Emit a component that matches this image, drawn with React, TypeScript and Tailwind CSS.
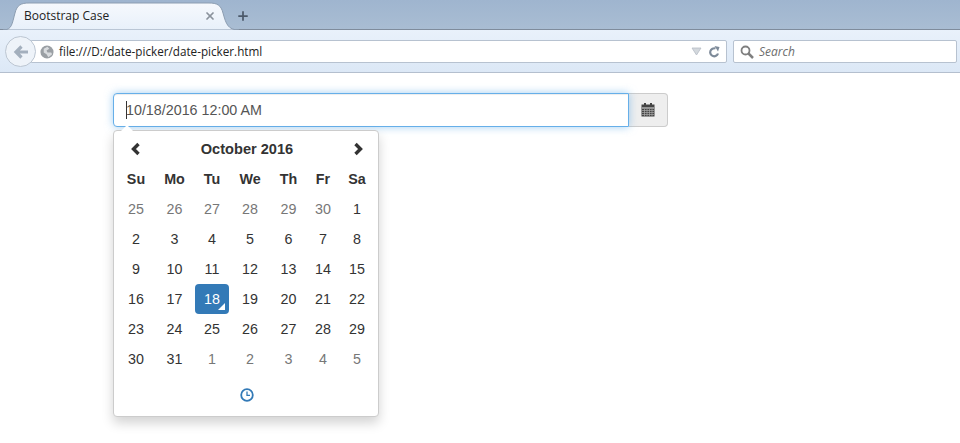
import { Plus, X } from "lucide-react";

const COLUMNS = "grid grid-cols-[36px_41px_34px_42px_35px_34px_34px]";
const WEEKDAYS = ["Su", "Mo", "Tu", "We", "Th", "Fr", "Sa"];

const DAYS: { d: number; old?: boolean }[] = [
  ...[25, 26, 27, 28, 29, 30].map((d) => ({ d, old: true })),
  ...Array.from({ length: 31 }, (_, i) => ({ d: i + 1 })),
  ...[1, 2, 3, 4, 5].map((d) => ({ d, old: true })),
];

const Chevron = ({ left }: { left?: boolean }) => (
  <svg width="14" height="14" viewBox="0 0 14 14">
    <path
      d={left ? "M9.500 2 L4.500 7 L9.500 12" : "M4.500 2 L9.500 7 L4.500 12"}
      fill="none"
      stroke="#333"
      strokeWidth="3.400"
    />
  </svg>
);

const CalendarIcon = () => (
  <svg width="14" height="14" viewBox="0 0 14 14">
    <rect x="0.500" y="1.500" width="13" height="12" fill="#444" />
    <rect x="3" y="0" width="2" height="3" fill="#444" />
    <rect x="9" y="0" width="2" height="3" fill="#444" />
    <path d="M1 5h12" stroke="#e6e6e6" strokeWidth="1" />
    <path d="M1 7.500h12M1 9.500h12M1 11.500h12M3.500 6v7M6 6v7M8.500 6v7M11 6v7" stroke="#aaa" strokeWidth="0.700" />
  </svg>
);

const ClockIcon = () => (
  <svg width="14" height="14" viewBox="0 0 14 14">
    <circle cx="7" cy="7" r="5.800" fill="none" stroke="#337ab7" strokeWidth="1.800" />
    <path d="M7 3.500V7.300H10" fill="none" stroke="#337ab7" strokeWidth="1.300" />
  </svg>
);

const BrowserChrome = () => (
  <div className="font-['Open_Sans',sans-serif]">
    <div className="h-[30px] bg-gradient-to-b from-[#9fb5cf] to-[#a9bdd3] flex items-end pl-[3px] border-b border-[#7f8c9c]">
      <div className="relative w-[236px] h-[28px] -mb-px flex items-center pl-[21px] pr-[13px]">
        <svg className="absolute inset-0" width="236" height="28" viewBox="0 0 236 28">
          <defs>
            <linearGradient id="tab" x1="0" y1="0" x2="0" y2="1">
              <stop offset="0" stopColor="#f6f9fd" />
              <stop offset="1" stopColor="#e8f0fa" />
            </linearGradient>
          </defs>
          <path
            d="M0 28 C9 28 9 22 12 11 C14 3 18 1 26 1 H206 C214 1 218 3 220 11 C223 22 225 28 236 28 Z"
            fill="url(#tab)"
            stroke="#8c9db1"
            strokeWidth="1"
          />
        </svg>
        <span className="relative flex-1 text-[12px] text-[#222]">Bootstrap Case</span>
        <X className="relative mr-[10px] text-[#8a929c]" size={12} strokeWidth={3.5} />
      </div>
      <Plus className="ml-[-3px] mb-[6px] text-[#4c5a6b]" size={14} strokeWidth={3} />
    </div>
    <div className="h-[43px] bg-gradient-to-b from-[#e9f1fb] to-[#dce8f6] border-b border-[#b4bfce] flex items-center pl-[5px] pr-[3px] pt-px">
      <div className="relative z-10 w-[31px] h-[31px] rounded-full bg-[#eef3f9] border border-[#bcc6d2] flex items-center justify-center -mr-[5px]">
        <svg width="16" height="14" viewBox="0 0 16 14">
          <path d="M15 7H4M8.500 1.500L3 7l5.500 5.500" fill="none" stroke="#a3afbd" strokeWidth="3.200" />
        </svg>
      </div>
      <div className="flex-1 h-[23px] bg-white border border-[#b7c2d0] rounded-r-[2px] flex items-center pl-[8px] pr-[6px] text-[11.700px] text-[#222]">
        <svg width="14" height="14" viewBox="0 0 15 15" className="mr-[5px]">
          <circle cx="7.500" cy="7.500" r="7" fill="#9a9fa4" />
          <path d="M4 4l4-2 2 2-3 2 1 2 4 0 1 2-4 3-2-3-3-2z" fill="#d8dbde" />
        </svg>
        <span className="flex-1">file:///D:/date-picker/date-picker.html</span>
        <svg width="11" height="9" viewBox="0 0 11 9" className="mr-[6px]">
          <path d="M1 1h9L5.500 8z" fill="#d3d8dd" stroke="#b6bdc5" strokeWidth="0.800" />
        </svg>
        <svg width="12" height="12" viewBox="0 0 12 12">
          <path d="M10 7.500A4 4 0 1 1 7.500 2.500" fill="none" stroke="#7d8a99" strokeWidth="2.200" />
          <path d="M6.500 0L11.500 1 10 5.500z" fill="#7d8a99" />
        </svg>
      </div>
      <div className="w-[224px] h-[23px] ml-[6px] bg-white border border-[#b7c2d0] rounded-[2px] flex items-center pl-[6px] text-[12px] italic text-[#6d6d6d]">
        <svg width="14" height="14" viewBox="0 0 14 14" className="mr-[5px]">
          <circle cx="5.500" cy="5.500" r="4" fill="none" stroke="#7f7f7f" strokeWidth="1.800" />
          <path d="M8.500 8.500L13 13" stroke="#7f7f7f" strokeWidth="2.500" />
        </svg>
        Search
      </div>
    </div>
  </div>
);

const DatePicker = () => (
  <div className="relative w-[266px] mt-[3px] bg-white border border-[#ccc] rounded-[4px] shadow-[0_6px_12px_rgba(0,0,0,0.175)] px-[4px] pt-[3px]">
    {/* little arrow on top of the popup */}
    <div className="absolute left-[7px] -top-[6px] w-0 h-0 border-x-[6px] border-x-transparent border-b-[6px] border-b-white" />
    <div className={COLUMNS + " h-[30px] items-center text-center font-bold"}>
      <span className="flex justify-center pr-px"><Chevron left /></span>
      <span className="col-span-5 pt-[2px] text-[14.600px]">October 2016</span>
      <span className="flex justify-center pl-px"><Chevron /></span>
    </div>
    <div className={COLUMNS + " h-[30px] items-center text-center font-bold"}>
      {WEEKDAYS.map((w) => (
        <span key={w} className="pt-[2px]">{w}</span>
      ))}
    </div>
    <div className={COLUMNS}>
      {DAYS.map(({ d, old }, i) =>
        d === 18 && !old ? (
          <span
            key={i}
            className="relative h-[30px] pt-[2px] flex items-center justify-center rounded-[4px] bg-[#337ab7] text-white"
          >
            {d}
            <span className="absolute right-[4px] bottom-[4px] w-0 h-0 border-l-[7px] border-l-transparent border-b-[7px] border-b-white" />
          </span>
        ) : (
          <span
            key={i}
            className={"h-[30px] pt-[2px] flex items-center justify-center " + (old ? "text-[#777]" : "")}
          >
            {d}
          </span>
        ),
      )}
    </div>
    <div className="h-[42px] flex items-center justify-center pl-px">
      <ClockIcon />
    </div>
  </div>
);

export default function App() {
  return (
    <div className="h-[443px] bg-white overflow-hidden">
      <BrowserChrome />
      <main className="pt-[20px] pl-[113px] font-['Liberation_Sans',sans-serif] text-[14.300px] text-[#333]">
        <div className="flex w-[555px] h-[34px]">
          <div className="relative flex-1 border border-[#66afe9] rounded-l-[4px] bg-white shadow-[inset_0_1px_1px_rgba(0,0,0,0.075),0_0_8px_rgba(102,175,233,0.6)] flex items-center pl-[12px] pt-[2px] text-[#555]">
            <span className="absolute left-[12px] top-[7px] w-px h-[18px] bg-[#333]" />
            10/18/2016 12:00 AM
          </div>
          <div className="w-[39px] bg-[#eee] border border-l-0 border-[#ccc] rounded-r-[4px] flex items-center justify-center">
            <CalendarIcon />
          </div>
        </div>
        <DatePicker />
      </main>
    </div>
  );
}
